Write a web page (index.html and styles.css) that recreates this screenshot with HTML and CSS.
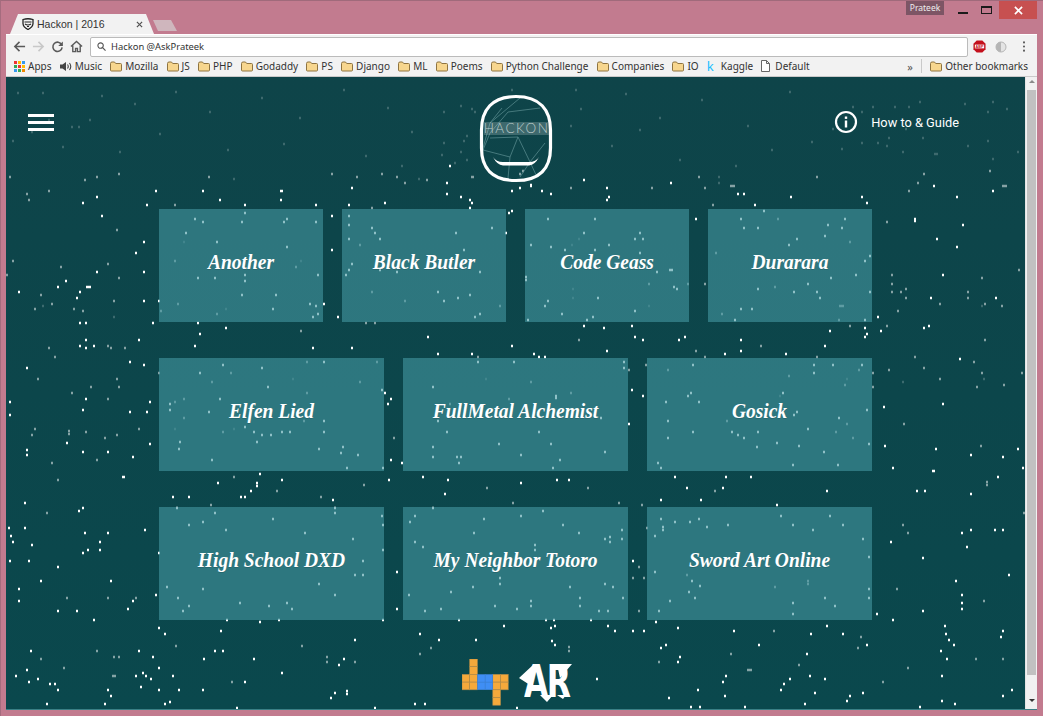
FILE: index.html
```html
<!DOCTYPE html>
<html lang="en">
<head>
<meta charset="utf-8">
<title>Hackon | 2016</title>
<link rel="stylesheet" href="styles.css">
</head>
<body>
<svg class="defs" width="0" height="0" aria-hidden="true">
  <symbol id="folder" viewBox="0 0 12 11"><path d="M.5 2.500q0-1.500 1.500-1.500h2.500l1.200 1.500H10.500q1 0 1 1v5.500q0 1-1 1h-9q-1 0-1-1z" fill="#f7d68e" stroke="#8f7440"/></symbol>
</svg>
<div class="window">
  <div class="titlebar">
    <div class="tab">
      <svg class="favicon" viewBox="0 0 12 12"><path d="M1 1.500q5-1.500 10 0v4q0 3.500-5 6-5-2.500-5-6z" fill="none" stroke="#222" stroke-width="1.300"/><path d="M2.500 4h7M3 6q3 2 6 0M5 8.500h2" stroke="#222" stroke-width="1.200" fill="none"/></svg>
      <span class="tab-title">Hackon | 2016</span>
      <svg class="tab-close" viewBox="0 0 8 8"><path d="M1 1l6 6M7 1l-6 6" stroke="#555" stroke-width="1.400"/></svg>
    </div>
    <div class="newtab"></div>
    <div class="profile">Prateek</div>
    <div class="win-min"></div>
    <div class="win-max"></div>
    <div class="win-close"><svg viewBox="0 0 10 10" class="close-x"><path d="M1 1l8 8M9 1l-8 8" stroke="#fff" stroke-width="1.800"/></svg></div>
  </div>
  <div class="toolbar">
    <svg class="nav" viewBox="0 0 14 14"><path d="M13 7H2.500M7 2L2 7l5 5" fill="none" stroke="#5a5a5a" stroke-width="1.700"/></svg>
    <svg class="nav" viewBox="0 0 14 14"><path d="M1 7h10.500M7 2l5 5-5 5" fill="none" stroke="#c8c8c8" stroke-width="1.700"/></svg>
    <svg class="nav" viewBox="0 0 14 14"><path d="M11.500 5A5 5 0 1 0 12 8" fill="none" stroke="#5a5a5a" stroke-width="1.700"/><path d="M12.800 1.500v5h-5z" fill="#5a5a5a"/></svg>
    <svg class="nav" viewBox="0 0 14 14"><path d="M1 7l6-5.500L13 7M3 6v6.500h3V9h2v3.500h3V6" fill="none" stroke="#5a5a5a" stroke-width="1.500"/></svg>
    <div class="omnibox">
      <svg class="search" viewBox="0 0 10 10"><circle cx="4" cy="4" r="3" fill="none" stroke="#555" stroke-width="1.200"/><path d="M6.200 6.200L9.500 9.500" stroke="#555" stroke-width="1.300"/></svg>
      <span>Hackon @AskPrateek</span>
    </div>
    <svg class="abp" viewBox="0 0 14 14"><path d="M4 .500h6L13.500 4v6L10 13.500H4L.5 10V4z" fill="#c4101c"/><rect x="2" y="5" width="10" height="4" fill="#fff"/><text x="7" y="8.600" class="abp-text">ABP</text></svg>
    <svg class="ext" viewBox="0 0 12 12"><circle cx="6" cy="6" r="5" fill="#e4e4e4" stroke="#b5b5b5"/><path d="M6 1a5 5 0 0 0 0 10z" fill="#b5b5b5"/></svg>
    <svg class="menu" viewBox="0 0 4 12"><circle cx="2" cy="1.500" r="1.100" fill="#555"/><circle cx="2" cy="6" r="1.100" fill="#555"/><circle cx="2" cy="10.500" r="1.100" fill="#555"/></svg>
  </div>
  <div class="bookmarks">
    <span class="bm apps"><svg class="ic ic-apps" viewBox="0 0 11 11"><path fill="#e33" d="M0 0h3v3H0z"/><path fill="#fb0" d="M4 0h3v3H4z"/><path fill="#39e" d="M8 0h3v3H8z"/><path fill="#3a5" d="M0 4h3v3H0z"/><path fill="#e33" d="M4 4h3v3H4z"/><path fill="#fb0" d="M8 4h3v3H8z"/><path fill="#39e" d="M0 8h3v3H0z"/><path fill="#3a5" d="M4 8h3v3H4z"/><path fill="#e80" d="M8 8h3v3H8z"/></svg>Apps</span>
    <span class="bm music"><svg class="ic" viewBox="0 0 12 11"><path d="M0 3.500h2.500L6 1v9L2.500 7.500H0z" fill="#444"/><path d="M7.500 3.500q1.500 2 0 4M9.500 2q2.500 3.500 0 7" fill="none" stroke="#444" stroke-width="1.100"/></svg>Music</span>
    <span class="bm"><svg class="ic"><use href="#folder"/></svg>Mozilla</span>
    <span class="bm"><svg class="ic"><use href="#folder"/></svg>JS</span>
    <span class="bm"><svg class="ic"><use href="#folder"/></svg>PHP</span>
    <span class="bm"><svg class="ic"><use href="#folder"/></svg>Godaddy</span>
    <span class="bm"><svg class="ic"><use href="#folder"/></svg>PS</span>
    <span class="bm"><svg class="ic"><use href="#folder"/></svg>Django</span>
    <span class="bm"><svg class="ic"><use href="#folder"/></svg>ML</span>
    <span class="bm"><svg class="ic"><use href="#folder"/></svg>Poems</span>
    <span class="bm"><svg class="ic"><use href="#folder"/></svg>Python Challenge</span>
    <span class="bm"><svg class="ic"><use href="#folder"/></svg>Companies</span>
    <span class="bm"><svg class="ic"><use href="#folder"/></svg>IO</span>
    <span class="bm"><span class="kaggle">k</span>Kaggle</span>
    <span class="bm"><svg class="ic ic-doc" viewBox="0 0 9 12"><path d="M.5.500h5l3 3v8h-8zM5.500.500v3h3" fill="#fff" stroke="#666"/></svg>Default</span>
    <span class="more">»</span>
    <span class="sep"></span>
    <span class="bm other"><svg class="ic"><use href="#folder"/></svg>Other bookmarks</span>
  </div>
  <div class="viewport">
    <main class="page">
      <svg class="stars" viewBox="7 77 1019 633" width="1019" height="633" aria-hidden="true">
        <path class="star-b" d="M156 191h2M203 191h2M282 191h2M352 188h2M83 203h2M97 197h2M102 216h2M147 205h2M156 191h2M220 200h2M245 205h2M281 191h2M281 200h2M316 205h2M349 205h2M385 203h2M447 183h2M447 194h2M461 197h2M470 200h2M472 203h2M470 208h2M512 191h2M509 213h2M512 211h2M144 242h2M136 253h2M97 272h2M144 272h2M66 281h2M58 287h2M87 287h5M19 292h2M80 292h2M77 298h2M144 301h2M159 301h2M80 323h2M86 323h2M153 323h2M198 323h2M226 328h2M200 334h2M332 216h2M332 250h2M324 304h2M338 317h2M428 337h2M352 348h2M313 348h2M195 346h2M512 346h2M438 354h2M472 354h2M86 340h2M80 346h2M94 346h2M86 348h2M139 340h2M130 362h2M144 365h2M27 368h2M86 399h2M150 402h2M10 402h2M83 410h2M130 412h2M147 412h2M10 415h2M385 393h2M391 399h2M388 404h2M584 180h2M531 186h2M542 191h2M551 194h2M607 188h2M609 197h2M607 200h2M671 183h2M738 194h2M744 194h2M755 205h2M791 197h2M862 197h2M867 203h2M934 186h2M957 197h2M993 191h2M696 219h2M915 219h2M915 221h2M963 225h2M937 239h2M957 247h2M943 275h2M931 298h2M996 298h2M878 317h2M865 328h2M881 331h2M867 334h2M865 337h2M830 331h2M825 346h2M924 328h2M929 326h2M960 359h2M884 407h2M943 404h2M584 326h2M604 328h2M632 326h2M635 337h2M643 340h2M679 340h2M685 337h2M741 340h2M741 351h2M725 354h2M786 354h2M607 351h2M534 354h2M539 357h2M545 357h2M632 390h2M643 396h2M629 424h2M450 166h2M447 183h2M512 191h2M520 188h2M531 185h2M542 191h2M584 180h2M27 450h2M27 455h2M83 452h2M108 452h2M133 457h2M67 443h2M150 444h2M123 477h3M218 483h2M257 483h2M257 486h2M260 474h2M282 480h2M389 480h2M423 477h2M448 480h2M521 483h2M557 480h2M569 480h2M675 477h2M726 477h2M751 477h2M687 488h2M723 488h2M445 494h2M251 491h2M173 497h2M189 497h2M241 497h2M245 497h2M333 500h2M661 500h2M701 500h2M827 491h2M917 491h2M925 491h2M971 494h2M998 477h2M933 471h3M893 468h2M1023 468h2M1003 457h2M1018 449h2M936 449h2M885 446h2M971 455h2M25 503h2M83 508h2M79 511h2M25 528h2M9 528h2M11 536h2M13 542h2M32 545h2M145 530h2M85 533h2M108 533h2M100 542h2M88 550h2M83 553h2M100 550h2M10 561h2M29 561h2M58 567h2M111 581h2M41 581h2M19 589h2M156 595h2M133 601h2M19 601h2M58 611h2M77 611h2M128 609h2M94 620h2M159 628h2M165 634h2M221 631h2M355 640h2M420 634h2M439 640h2M476 640h2M504 626h2M551 628h2M555 626h2M608 626h2M615 631h2M633 631h2M644 631h2M678 628h2M734 631h2M811 634h2M843 634h2M827 626h2M867 645h2M945 626h2M946 634h2M949 640h2M954 645h2M1003 631h2M1001 637h2M941 651h2M947 659h2M552 641h2M555 645h2M666 645h2M661 648h2M759 645h2M807 654h2M678 662h2M680 657h2M31 651h2M139 651h2M153 657h2M215 651h2M223 651h2M254 659h2M204 659h2M344 659h2M339 665h2M159 668h2M27 670h2M143 673h2M136 676h2M146 676h2M173 676h2M151 679h2M16 676h2M38 679h2M29 682h2M50 684h2M55 684h2M58 690h2M141 687h2M108 690h2M111 696h2M159 690h2M203 690h2M282 673h2M245 682h2M179 690h2M597 679h2M726 676h2M723 682h2M790 679h2M810 676h2M825 679h2M784 684h2M942 676h2M781 690h2M698 690h2M1012 690h2M335 693h2M347 691h2M347 694h2M331 698h2M669 698h2M725 696h2M815 693h2M850 696h2M863 693h2M847 701h2M942 701h2M955 704h2M1003 696h2M920 707h2M691 707h2M700 707h2M745 707h2M805 704h2M47 704h2M105 704h2M165 704h2M170 702h2M415 704h2M425 704h2M375 708h2M517 708h2M237 708h2M159 553h2M383 550h2M397 572h2M633 561h2M397 609h2M877 614h2M891 542h2M962 533h2M971 530h2M995 530h2M1003 530h2M967 547h2M923 558h2M1009 575h2M956 581h2M962 595h2M962 603h2M962 609h2M923 611h2M893 620h2M227 620h2M260 622h2M279 620h2M383 620h2M459 620h2M546 620h2M554 620h2M591 620h2M656 622h2M391 460h2M195 219h2M203 222h2M245 213h2M242 222h2M284 222h2M287 219h2M316 222h2M186 233h2M217 242h2M287 247h2M198 278h2M215 278h2M245 275h2M245 281h2M318 275h2M242 295h2M276 295h2M273 309h2M310 304h2M316 306h2M318 314h2M313 317h2M349 216h2M349 225h2M349 239h2M372 228h2M375 233h2M380 239h2M352 264h2M349 270h2M346 275h2M380 270h2M397 272h2M456 233h2M492 228h2M506 233h2M464 250h2M480 272h2M438 292h2M444 301h2M458 298h2M470 295h2M480 314h2M475 317h2M223 365h2M200 373h2M262 368h2M324 362h2M268 387h2M382 390h2M220 399h2M170 404h2M170 410h2M209 412h2M324 421h2M245 427h2M254 432h2M262 435h2M271 435h2M282 432h2M290 432h2M324 432h2M478 362h2M514 362h2M433 387h2M438 421h2M447 432h2M548 219h2M595 219h2M584 233h2M640 233h2M635 239h2M643 239h2M531 245h2M551 247h2M609 245h2M595 250h2M565 250h2M640 253h2M670 270h4M657 272h2M674 287h2M677 289h2M598 298h2M548 301h2M545 306h2M635 311h2M562 314h2M593 317h2M587 320h2M528 320h2M526 277h2M526 280h2M764 211h2M741 219h2M845 219h2M744 228h2M758 228h2M828 225h2M842 228h2M825 236h2M797 239h2M789 245h2M870 256h2M865 261h2M856 275h2M831 278h2M808 284h2M758 289h2M794 292h2M817 292h2M870 292h2M820 298h2M741 309h2M752 309h2M735 320h2M865 320h2M624 362h2M624 368h2M556 396h2M556 398h2M601 418h2M539 432h2M693 365h2M814 365h2M833 365h2M862 365h2M814 373h2M783 393h2M691 393h2M688 396h2M666 402h2M699 402h2M867 410h2M797 412h2M794 415h2M839 418h2M668 421h2M808 429h2M693 432h2M732 432h2M758 432h2M738 435h2M744 438h2M668 438h2M180 442h2M179 449h2M212 460h2M257 442h2M319 449h2M341 453h2M343 447h2M358 455h2M347 468h2M383 468h2M402 463h2M433 447h2M433 457h2M457 457h2M461 457h2M459 463h2M551 444h2M521 455h2M560 460h2M553 468h2M605 452h2M757 447h2M777 443h2M799 446h2M824 452h2M793 465h2M838 465h2M869 444h2M658 463h2M661 468h2M499 444h2M177 508h2M215 513h2M335 508h2M433 508h2M543 511h2M521 516h2M484 519h2M415 516h2M410 522h2M335 513h2M273 519h2M203 522h2M189 525h2M226 530h2M305 533h2M353 539h2M383 525h2M382 516h2M474 533h2M563 525h2M579 533h2M622 530h2M610 537h2M605 539h2M622 539h2M610 542h2M415 542h2M423 547h2M535 545h2M535 550h2M661 519h2M675 522h2M690 522h2M699 519h2M707 527h2M728 525h2M777 505h2M781 516h2M793 525h2M830 516h2M843 525h2M813 530h2M863 539h2M869 557h2M663 527h2M663 530h2M655 536h2M363 561h2M363 575h2M355 575h2M700 586h2M692 581h2M689 592h2M695 598h2M655 572h2M451 592h2M500 584h2M500 578h2M473 587h2M570 587h2M605 584h2M613 587h2M623 598h2M580 598h2M531 601h2M531 606h2M495 606h2M517 609h2M441 609h2M425 611h2M409 595h2M599 611h2M608 611h2M580 606h2M167 587h2M203 589h2M319 584h2M335 595h2M178 598h2M189 606h2M183 611h2M240 603h2M269 606h2M287 603h2M292 609h2M670 601h2M659 611h2M825 598h2M793 614h2M835 606h2M869 589h2M869 598h2M793 603h2"/>
        <path class="star-g" d="M10 177h2M85 180h2M97 177h2M119 174h2M209 177h2M332 174h2M357 177h2M382 174h2M397 177h2M405 183h2M427 180h2M473 177h2M27 194h2M29 200h2M49 191h2M117 230h2M175 205h2M372 208h2M13 261h2M61 267h2M108 264h2M7 275h2M119 278h2M41 295h2M114 301h2M52 304h2M35 309h2M74 309h2M83 311h2M301 331h2M366 323h2M375 323h2M478 357h2M108 346h2M111 348h2M125 348h2M49 348h2M55 357h2M38 379h2M117 379h2M91 387h2M119 387h2M72 393h2M108 399h2M35 429h2M32 435h2M69 431h2M69 434h2M86 432h2M117 435h2M105 438h2M139 429h2M159 373h2M394 438h2M571 188h2M652 188h2M699 177h2M731 186h5M705 188h2M713 205h2M817 177h2M924 174h2M918 183h2M909 191h2M990 171h2M1003 186h5M887 222h2M1019 270h2M982 278h2M892 275h2M892 284h2M892 292h2M901 292h2M906 289h2M906 298h2M940 304h2M968 292h2M968 298h2M985 304h2M1002 306h2M898 311h2M887 326h2M850 326h2M985 340h2M915 357h2M974 362h2M924 368h2M889 370h2M873 373h2M982 373h2M940 379h2M977 387h2M1004 385h2M1022 373h2M873 387h2M904 424h2M688 284h2M705 284h2M579 340h2M761 346h2M696 351h2M817 357h2M705 357h2M629 370h2M646 365h2M472 177h2M520 174h2M523 171h2M58 480h2M97 460h2M52 463h2M234 477h2M364 485h2M588 488h2M487 488h2M277 491h2M321 497h2M513 503h2M619 503h2M715 491h2M987 482h2M987 485h2M981 446h2M47 513h2M211 505h2M642 505h2M1024 513h2M67 598h2M108 598h2M136 598h2M774 631h2M861 637h2M858 648h2M976 659h2M1003 659h2M569 647h2M569 651h2M731 654h2M659 662h2M799 665h2M908 668h2M97 651h2M114 657h2M119 657h2M41 659h2M176 646h2M302 646h2M327 657h2M327 662h2M355 662h2M420 654h2M431 648h2M64 668h2M113 676h4M232 682h2M748 670h5M883 682h2M639 567h2M633 578h2M644 578h2M647 528h2M639 611h2M903 525h2M908 533h2M897 589h2M984 601h2M178 304h2M161 311h2M217 314h2M175 261h2M296 267h2M360 245h2M405 301h2M372 292h2M500 306h2M231 373h2M307 362h2M377 362h2M212 382h2M360 382h2M307 393h2M184 399h2M175 402h2M184 418h2M304 421h2M223 432h2M509 399h2M450 404h2M649 284h2M840 306h5M722 314h2M839 320h2M850 242h2M716 253h2M778 219h2M775 287h2M531 382h2M571 393h2M668 370h2M859 370h2M789 376h2M845 385h2M847 424h2M727 421h2M836 432h2M853 438h2M687 575h2M775 587h2M808 581h2M808 584h2"/>
        <path class="star-d" d="M234 179h2M419 179h2M114 317h2M43 306h2M719 177h2M719 183h2M984 379h2M903 382h2M982 306h2M184 242h2M301 261h2M226 309h2M293 379h2M175 429h2M234 429h2M486 379h2M579 239h2M572 245h2M573 289h2M573 298h2M649 306h2M847 379h2M780 396h2M862 112h2M853 107h2M873 107h2M895 107h2M909 107h2M920 102h2M965 104h2M993 102h2M988 112h2M1007 109h2M833 129h2M906 129h2M862 143h2M878 143h2M887 146h2M889 138h2M923 138h2M842 149h2M903 152h2M935 154h4M968 146h2M988 141h2M1018 152h2M993 159h2M18 93h2M43 93h2M49 120h2M72 127h2M79 127h2M32 132h2M13 141h2M63 147h2M461 106h2M472 109h2M475 112h2M444 112h2M512 90h2M576 90h2M581 109h2M571 126h2M467 136h2M444 143h2M464 141h2M461 152h2M467 160h2M455 163h2M442 155h2M102 96h2M135 104h2M176 92h2M210 112h2M262 98h2M300 118h2M344 90h2M388 108h2M412 132h2M160 134h2M228 150h2M284 144h2M366 156h2M402 166h2M120 152h2M90 120h2M626 94h2M660 118h2M702 100h2M748 126h2M790 92h2M812 142h2M612 146h2M680 160h2M736 166h2M772 150h2M640 130h2"/>
      </svg>
      <header class="top">
        <div class="burger"><span></span><span></span><span></span></div>
        <svg class="logo" viewBox="478 92 76 92" role="img" aria-label="Hackon logo">
          <path class="logo-net" d="M520 98L490 123L483 148M540 108L508 112L490 133L483 150M490 138L518 137L530 162L545 143M518 137L510 157L483 150M510 157L508 178M530 162L537 177M530 162L520 177M502 108L490 123"/>
          <rect class="logo-band" x="484" y="122" width="65" height="13"/>
          <text class="logo-text" x="516.500" y="133">HACKON</text>
          <path class="logo-smile" d="M493 157Q497 165 503 165.500H529Q535 165 539 157Q536 162 529 162H503Q496 162 493 157Z"/>
          <path class="logo-ring" d="M516 96.500C540 96.500 550.500 110 550.500 130V148C550.500 168 540 180.500 516 180.500C492 180.500 481.500 168 481.500 148V130C481.500 110 492 96.500 516 96.500Z"/>
        </svg>
        <div class="guide">
          <svg class="info" viewBox="0 0 24 24"><circle cx="12" cy="12" r="10" fill="none" stroke="#fff" stroke-width="2.200"/><rect x="10.800" y="10.500" width="2.400" height="7" fill="#fff"/><rect x="10.800" y="6.500" width="2.400" height="2.400" fill="#fff"/></svg>
          <span>How to &amp; Guide</span>
        </div>
      </header>
      <section class="grid">
        <div class="row">
          <a class="card"><span class="card-title">Another</span></a><a class="card"><span class="card-title">Black Butler</span></a><a class="card"><span class="card-title">Code Geass</span></a><a class="card"><span class="card-title">Durarara</span></a>
        </div>
        <div class="row">
          <a class="card"><span class="card-title">Elfen Lied</span></a><a class="card"><span class="card-title">FullMetal Alchemist</span></a><a class="card"><span class="card-title">Gosick</span></a>
        </div>
        <div class="row">
          <a class="card"><span class="card-title">High School DXD</span></a><a class="card"><span class="card-title">My Neighbor Totoro</span></a><a class="card"><span class="card-title">Sword Art Online</span></a>
        </div>
      </section>
      <footer class="foot">
        <svg class="tetris" viewBox="0 0 47 47" aria-hidden="true">
          <g class="t-o"><rect x="7.700" y="0" width="7.700" height="7.700"/><rect x="7.700" y="7.700" width="7.700" height="7.700"/><rect x="0" y="15.400" width="7.700" height="7.700"/><rect x="7.700" y="15.400" width="7.700" height="7.700"/><rect x="0" y="23.100" width="7.700" height="7.700"/><rect x="7.700" y="23.100" width="7.700" height="7.700"/><rect x="30.800" y="15.400" width="7.700" height="7.700"/><rect x="38.500" y="15.400" width="7.700" height="7.700"/><rect x="30.800" y="23.100" width="7.700" height="7.700"/><rect x="38.500" y="23.100" width="7.700" height="7.700"/><rect x="30.800" y="30.800" width="7.700" height="7.700"/><rect x="30.800" y="38.500" width="7.700" height="7.700"/></g>
          <g class="t-b"><rect x="15.400" y="15.400" width="7.700" height="7.700"/><rect x="23.100" y="15.400" width="7.700" height="7.700"/><rect x="15.400" y="23.100" width="7.700" height="7.700"/><rect x="23.100" y="23.100" width="7.700" height="7.700"/></g>
        </svg>
        <div class="ar">
          <svg class="ar-spikes" viewBox="0 0 54 47" aria-hidden="true"><path d="M0 19L14 6V28zM38 5H53L41 19zM21 36H34L28 43zM38 36H47L44 40z" fill="#fff"/></svg>
          <span class="ar-text">AR</span>
        </div>
      </footer>
    </main>
    <div class="scrollbar">
      <span class="arrow-up"></span>
      <div class="thumb"></div>
      <span class="arrow-down"></span>
    </div>
  </div>
</div>
</body>
</html>
```

FILE: styles.css
```css
* { box-sizing: border-box; }
html, body { margin: 0; height: 100%; overflow: hidden; }
body { background: #c27b8f; font-family: "Noto Sans", "Liberation Sans", sans-serif; }
.defs { position: absolute; }

.window { display: flex; flex-direction: column; height: 716px; border-top: 1px solid #a06a7b; border-left: 1px solid #a56c7e; }

.titlebar { display: flex; align-items: flex-start; height: 33px; padding-left: 9px; padding-right: 6px; }
.tab { align-self: flex-end; display: flex; align-items: center; width: 144px; height: 20px; padding-left: 12px; background: #f2f2f2; clip-path: polygon(8px 0, 136px 0, 144px 20px, 0 20px); }
.favicon { width: 12px; height: 12px; margin-right: 3px; }
.tab-title { flex: 1; font-family: "Liberation Sans", sans-serif; font-size: 10.500px; color: #333; white-space: nowrap; }
.tab-close { width: 7px; height: 7px; margin-right: 11px; }
.newtab { align-self: flex-end; width: 24px; height: 11px; margin: 0 0 3px -1px; background: #cfb6bd; clip-path: polygon(0 0, 18px 0, 24px 100%, 5px 100%); }
.profile { width: 38px; height: 14px; margin-left: auto; background: #7d5565; color: #eee; font-size: 8.500px; line-height: 14px; text-align: center; }
.win-min { width: 10px; height: 2px; margin: 11px 0 0 14px; background: #1a1a1a; }
.win-max { width: 11px; height: 8px; margin: 5px 0 0 13px; border: 1px solid #1a1a1a; border-top-width: 2px; }
.win-close { display: flex; align-items: center; justify-content: center; width: 38px; height: 18px; margin-left: 7px; background: #c75050; }
.close-x { width: 9px; height: 9px; }

.toolbar { display: flex; align-items: center; height: 24px; margin: 0 6px 0 5px; padding-left: 7px; background: #f2f2f2; border-top: 1px solid #fff; }
.nav { width: 13px; height: 13px; margin-right: 6px; flex: none; }
.omnibox { display: flex; align-items: center; flex: 1; height: 20px; margin-left: 1px; padding-left: 6px; background: #fff; border: 1px solid #bbb; border-radius: 2px; font-size: 9.400px; color: #333; }
.search { width: 9px; height: 9px; margin-right: 5px; }
.abp { width: 13px; height: 13px; margin: 0 9px 0 5px; }
.abp-text { font: bold 4px "Liberation Sans", sans-serif; text-anchor: middle; fill: #c4101c; }
.ext { width: 12px; height: 12px; margin-right: 15px; }
.menu { width: 4px; height: 11px; margin-right: 11px; }

.bookmarks { display: flex; align-items: center; gap: 8.200px; height: 19px; margin: 0 6px 0 5px; padding: 0 9px 2px 8px; background: #f2f2f2; border-bottom: 1px solid #c9c9c9; font-size: 10px; color: #333; white-space: nowrap; }
.bm { display: inline-flex; align-items: center; gap: 3px; }
.ic { width: 12px; height: 11px; flex: none; }
.ic-apps { width: 11px; }
.ic-doc { width: 9px; height: 12px; margin-right: 2px; }
.kaggle { width: 9px; margin-right: 2px; color: #20beff; font-size: 13px; line-height: 10px; }
.more { margin-left: auto; font-size: 11px; color: #555; }
.sep { width: 1px; height: 14px; background: #c9c9c9; }

.viewport { flex: 1; display: flex; min-height: 0; margin: 0 6px 6px 5px; border-bottom: 1px solid #3a7f85; }
.page { position: relative; flex: 1; overflow: hidden; background: linear-gradient(#0e4449, #0a484d); color: #fff; }
.stars { position: absolute; top: 0; left: 0; fill: none; stroke-width: 2.300; }
.star-b { stroke: #fff; }
.star-g { stroke: #fff; stroke-opacity: .5; }
.star-d { stroke: #fff; stroke-opacity: .2; }

.top { position: relative; display: grid; grid-template-columns: 1fr auto 1fr; height: 132px; }
.burger { display: flex; flex-direction: column; gap: 4px; width: 26px; margin: 37px 0 0 22px; }
.burger span { height: 3px; background: #fff; }
.logo { width: 76px; height: 92px; margin-top: 15px; }
.logo-net { fill: none; stroke: #5f9093; stroke-width: .7; }
.logo-band { fill: #fff; fill-opacity: .2; }
.logo-text { font: 300 13.500px Lato, sans-serif; letter-spacing: 1.500px; text-anchor: middle; fill: #bccccc; }
.logo-smile { fill: #fff; }
.logo-ring { fill: none; stroke: #fff; stroke-width: 3.200; }
.guide { display: flex; align-items: center; gap: 13px; justify-self: end; height: 24px; margin: 33px 66px 0 0; font-family: Roboto, sans-serif; font-size: 12.800px; white-space: nowrap; }
.info { width: 24px; height: 24px; }

.grid { position: relative; display: flex; flex-direction: column; gap: 36px; width: 713px; margin: 0 auto; }
.row { display: flex; gap: 19px; }
.card { flex: 1; display: flex; align-items: center; justify-content: center; height: 113px; padding-bottom: 8px; background: rgba(68, 151, 161, .6); font-family: "Liberation Serif", serif; font-style: italic; font-weight: 700; font-size: 19.500px; color: #fff; text-shadow: 0 1px 0 rgba(0,0,0,.15); }
.card-title { display: inline-block; transform: scaleY(1.12); white-space: nowrap; }

.foot { position: relative; display: flex; justify-content: center; align-items: flex-start; gap: 10px; margin-top: 39px; padding-left: 3px; }
.tetris { width: 47px; height: 47px; }
.t-o rect { fill: #f5a93b; stroke: #b08a4a; stroke-width: .6; }
.t-b rect { fill: #3f8ef5; stroke: #3f7fd0; stroke-width: .4; }
.ar { position: relative; width: 54px; height: 47px; }
.ar-spikes { position: absolute; top: 0; left: 0; width: 54px; height: 47px; }
.ar-text { position: absolute; top: 1px; left: 5px; font: 700 37px/38px "DejaVu Sans", sans-serif; letter-spacing: -2px; color: #fff; transform: scale(.85, 1.2); transform-origin: 0 0; }

.scrollbar { display: flex; flex-direction: column; align-items: center; width: 12px; background: #f1f1f1; border-left: 1px solid #e4e4e4; }
.arrow-up { width: 0; height: 0; margin: 3px 0 7px; border: 3px solid transparent; border-top: 0; border-bottom: 3px solid #8a8a8a; }
.thumb { width: 9px; height: 585px; background: #c1c1c1; }
.arrow-down { width: 0; height: 0; margin-top: 24px; border: 3.500px solid transparent; border-bottom: 0; border-top: 3.500px solid #333; }
```
